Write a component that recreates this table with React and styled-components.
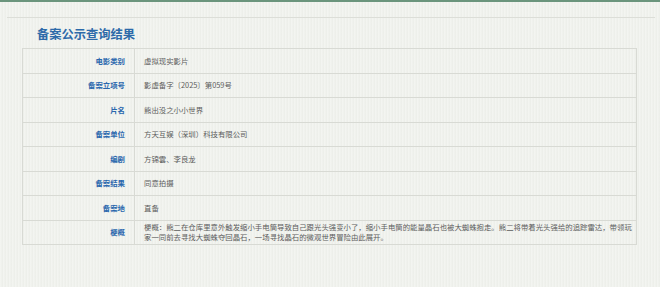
import React from "react";
import styled, { createGlobalStyle } from "styled-components";

const Global = createGlobalStyle`
  html, body { margin: 0; padding: 0; }
  body {
    background-color: #eff1ec;
    background-image: repeating-linear-gradient(90deg, rgba(255,255,255,0.25) 0px, rgba(255,255,255,0.25) 1px, rgba(0,0,0,0.008) 2px, rgba(0,0,0,0.008) 3px);
    font-family: "Noto Sans CJK SC", "Noto Sans", sans-serif;
    width: 660px;
    height: 287px;
    overflow: hidden;
  }
`;

const TopBar = styled.div`
  height: 2px;
  background: #6b957d;
`;

const Panel = styled.section`
  margin: 15px 5px 0 7px;
  border-top: 1px solid #dcded8;
  padding-top: 2px;
`;

const Title = styled.h2`
  margin: 0 0 0 30px;
  height: 28px;
  display: flex;
  align-items: center;
  font-size: 12.25px;
  font-weight: 700;
  color: #2d6aa9;
  letter-spacing: 0;
`;

const Table = styled.div`
  margin: 0 0 0 15px;
  width: 615px;
  box-sizing: border-box;
  border: 1px solid #d8dad4;
  border-bottom: none;
  display: grid;
  grid-template-columns: 112px 1fr;
`;

const Label = styled.div`
  display: flex;
  align-items: center;
  justify-content: flex-end;
  min-height: 23.5px;
  padding: 0 9px 0 0;
  border-right: 1px solid #d8dad4;
  border-bottom: 1px solid #d8dad4;
  font-size: 7.4px;
  line-height: 10px;
  font-weight: 700;
  color: #2a67ad;
`;

const Value = styled.div`
  display: flex;
  align-items: center;
  min-height: 23.5px;
  padding: 1px 2px 1px 9px;
  box-sizing: border-box;
  border-bottom: 1px solid #d8dad4;
  font-size: 7.4px;
  line-height: 10px;
  color: #5c5c5c;
`;

const rows = [
  ["电影类别", "虚拟现实影片"],
  ["备案立项号", "影虚备字〔2025〕第059号"],
  ["片名", "熊出没之小小世界"],
  ["备案单位", "方天互娱（深圳）科技有限公司"],
  ["编剧", "方锦雲、李良龙"],
  ["备案结果", "同意拍摄"],
  ["备案地", "直备"],
  [
    "梗概",
    "梗概：熊二在仓库里意外触发缩小手电筒导致自己跟光头强变小了，缩小手电筒的能量晶石也被大蜘蛛抱走。熊二将带着光头强给的追踪雷达，带领玩家一同前去寻找大蜘蛛夺回晶石，一场寻找晶石的微观世界冒险由此展开。",
  ],
];

export default function App() {
  return (
    <>
      <Global />
      <TopBar />
      <Panel>
        <Title>备案公示查询结果</Title>
        <Table>
          {rows.map(([k, v]) => (
            <React.Fragment key={k}>
              <Label>{k}</Label>
              <Value>{v}</Value>
            </React.Fragment>
          ))}
        </Table>
      </Panel>
    </>
  );
}
